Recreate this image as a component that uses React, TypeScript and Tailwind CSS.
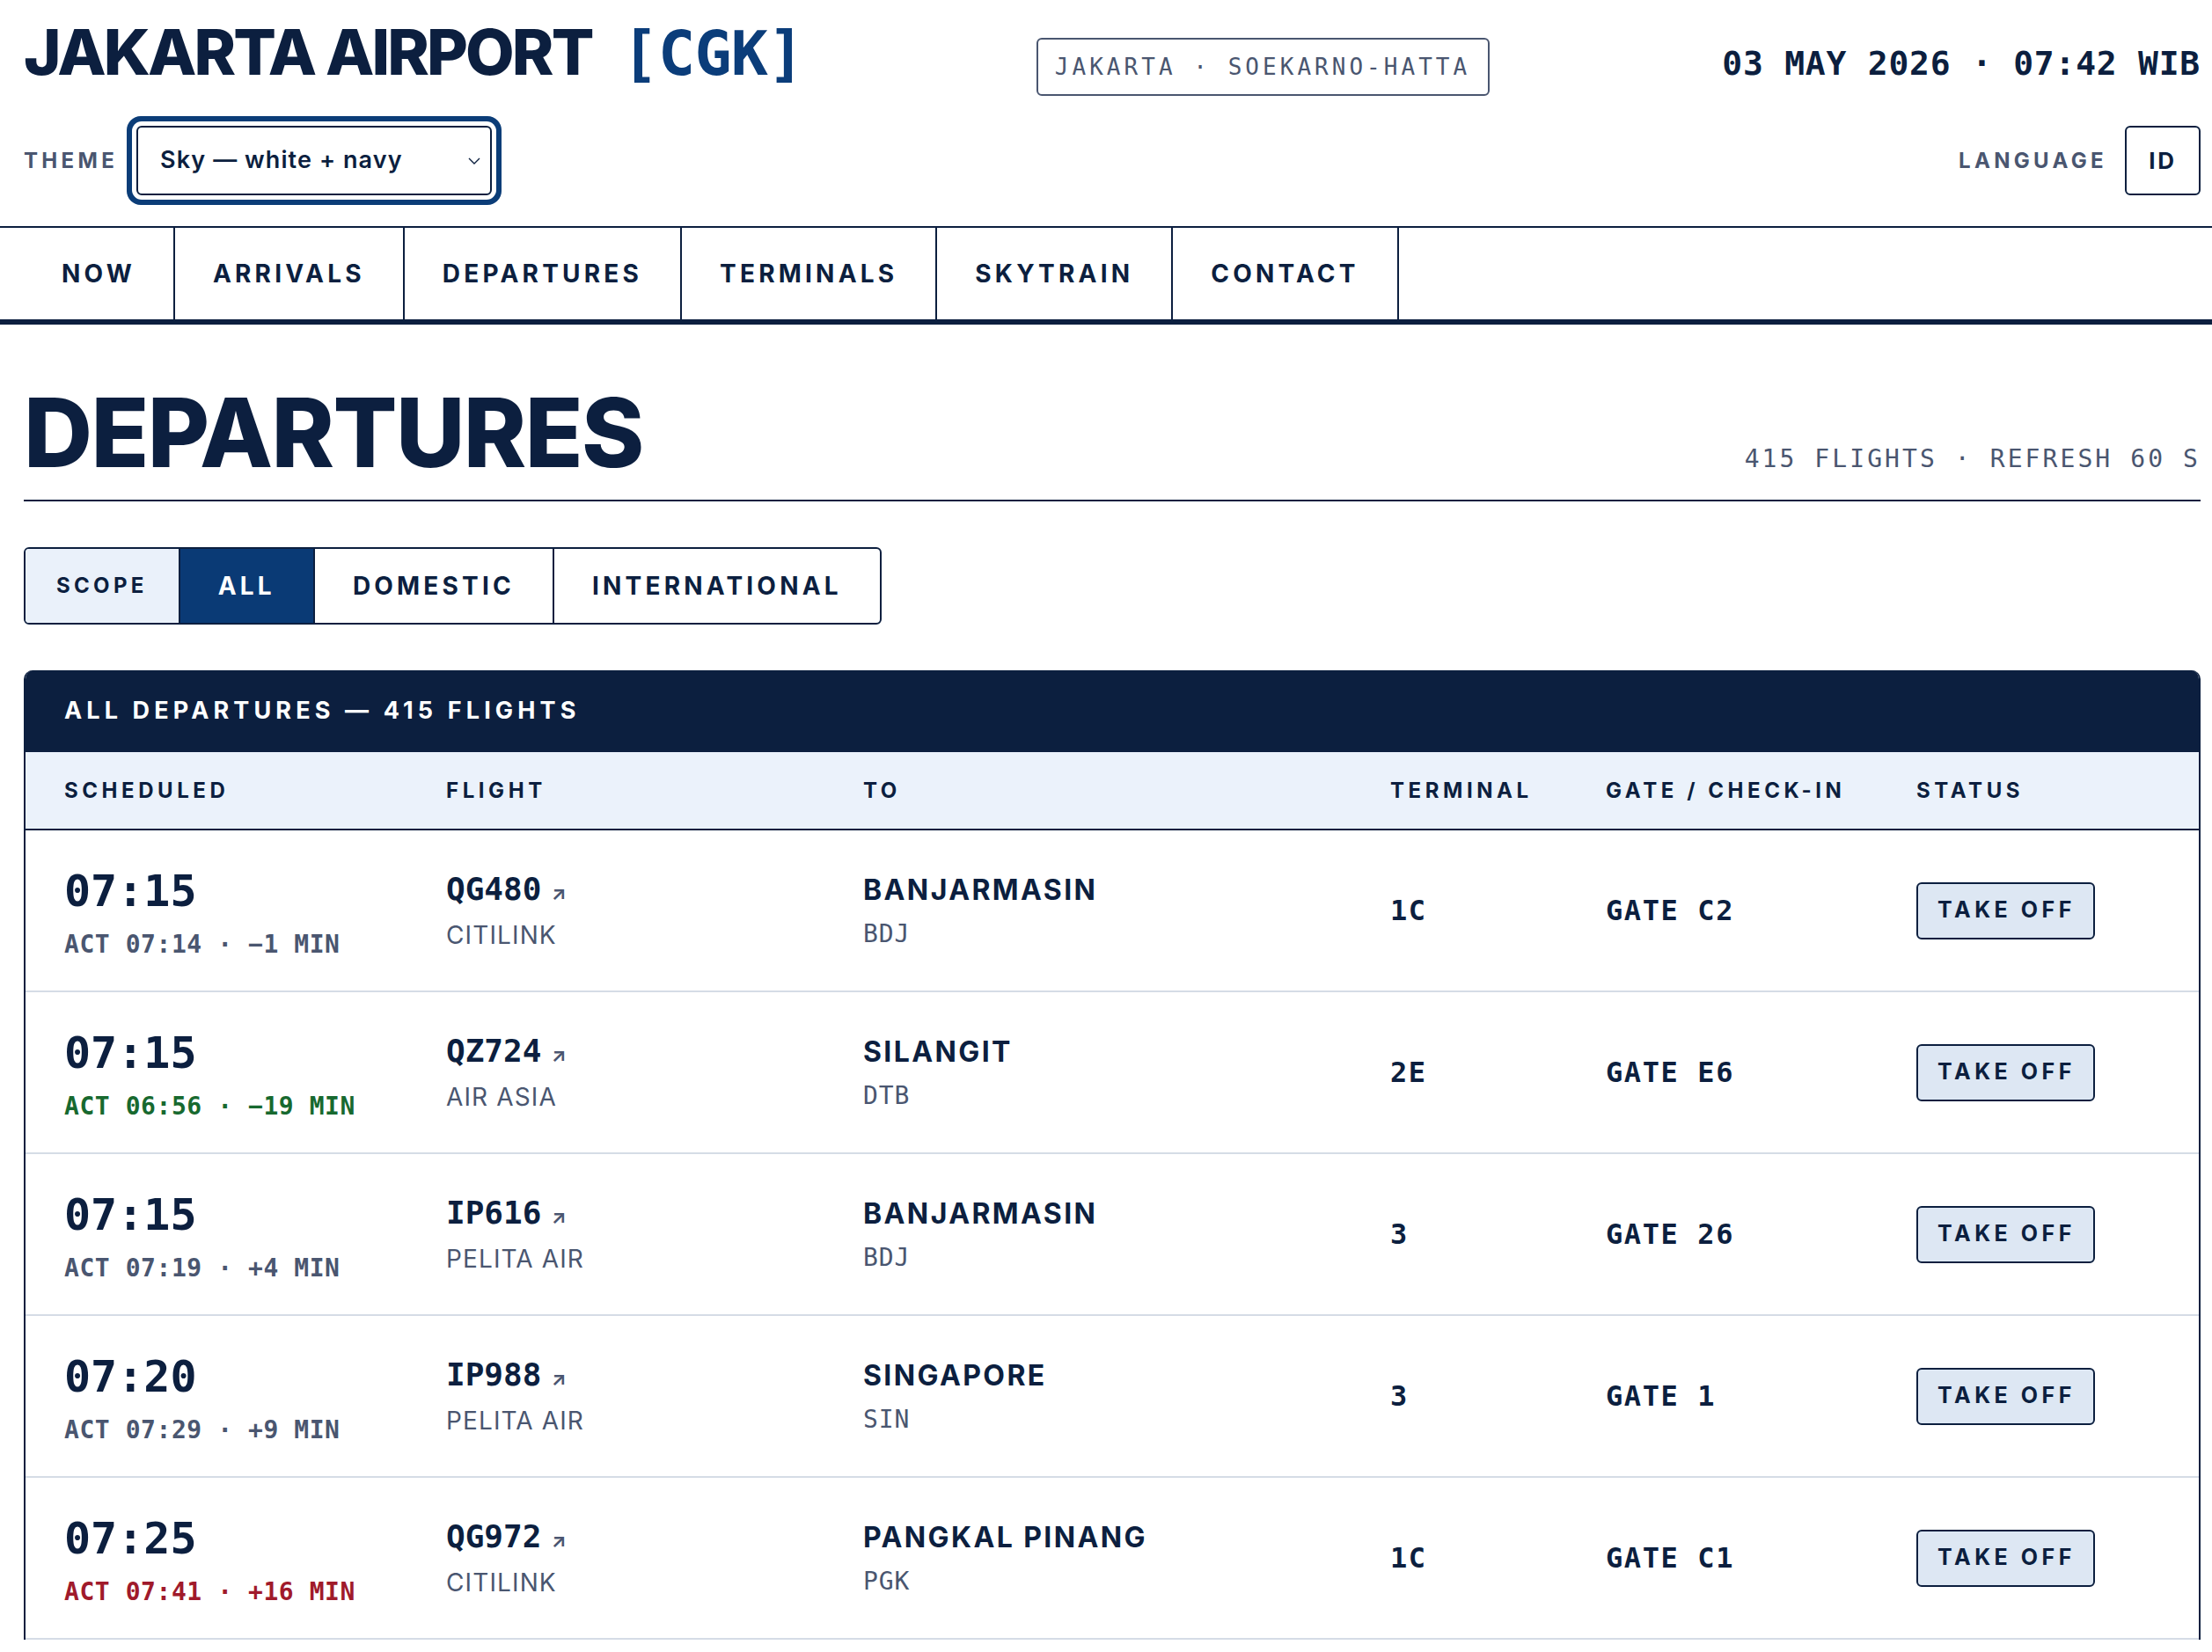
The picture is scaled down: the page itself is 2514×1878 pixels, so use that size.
const SANS = "font-['Inter','Liberation_Sans',sans-serif]"
const MONO = "font-['DejaVu_Sans_Mono','Liberation_Mono',monospace]"

type Flight = {
  time: string
  act: string
  delta: 'ok' | 'early' | 'late'
  code: string
  airline: string
  city: string
  iata: string
  terminal: string
  gate: string
}

const flights: Flight[] = [
  { time: '07:15', act: 'ACT 07:14 · −1 MIN', delta: 'ok', code: 'QG480', airline: 'CITILINK', city: 'BANJARMASIN', iata: 'BDJ', terminal: '1C', gate: 'GATE C2' },
  { time: '07:15', act: 'ACT 06:56 · −19 MIN', delta: 'early', code: 'QZ724', airline: 'AIR ASIA', city: 'SILANGIT', iata: 'DTB', terminal: '2E', gate: 'GATE E6' },
  { time: '07:15', act: 'ACT 07:19 · +4 MIN', delta: 'ok', code: 'IP616', airline: 'PELITA AIR', city: 'BANJARMASIN', iata: 'BDJ', terminal: '3', gate: 'GATE 26' },
  { time: '07:20', act: 'ACT 07:29 · +9 MIN', delta: 'ok', code: 'IP988', airline: 'PELITA AIR', city: 'SINGAPORE', iata: 'SIN', terminal: '3', gate: 'GATE 1' },
  { time: '07:25', act: 'ACT 07:41 · +16 MIN', delta: 'late', code: 'QG972', airline: 'CITILINK', city: 'PANGKAL PINANG', iata: 'PGK', terminal: '1C', gate: 'GATE C1' },
]

const navItems = ['NOW', 'ARRIVALS', 'DEPARTURES', 'TERMINALS', 'SKYTRAIN', 'CONTACT']

const cols = 'grid grid-cols-[434px_474px_599px_245px_353px_1fr] pl-[44px]'

function FlightRow({ f }: { f: Flight }) {
  const actColor =
    f.delta === 'early' ? 'text-[#17692f]' : f.delta === 'late' ? 'text-[#a01a2b]' : 'text-[#4a5670]'

  return (
    <div className={`${cols} h-[184px] items-center border-b-2 border-[#d5dce6]`}>
      {/* Scheduled */}
      <div className="pt-[6px]">
        <div className={`${MONO} text-[50px] leading-none font-bold`}>{f.time}</div>
        <div className={`${MONO} ${actColor} mt-[22px] text-[28px] leading-none font-bold tracking-[0.02em]`}>
          {f.act}
        </div>
      </div>

      {/* Flight */}
      <div>
        <div className="flex items-baseline">
          <span className={`${MONO} text-[36px] leading-none font-bold`}>{f.code}</span>
          <span className="ml-[11px] text-[22px] leading-none font-bold text-[#4a5670]">↗</span>
        </div>
        <div className="mt-[20px] text-[28px] leading-none tracking-[0.04em] text-[#4a5670]">{f.airline}</div>
      </div>

      {/* To */}
      <div className="pt-[2px]">
        <div className="text-[32px] leading-none font-bold tracking-[0.075em]">{f.city}</div>
        <div className={`${MONO} mt-[20px] text-[28px] leading-none tracking-[0.03em] text-[#4a5670]`}>{f.iata}</div>
      </div>

      <div className={`${MONO} text-[32px] leading-none font-bold tracking-[0.05em]`}>{f.terminal}</div>
      <div className={`${MONO} text-[32px] leading-none font-bold tracking-[0.05em]`}>{f.gate}</div>

      {/* Status */}
      <div>
        <span className="inline-flex h-[65px] items-center rounded-[6px] border-2 border-[#0c1f3f] bg-[#dde7f3] pr-[20px] pl-[22px] text-[25px] font-bold tracking-[0.18em]">
          TAKE OFF
        </span>
      </div>
    </div>
  )
}

export default function App() {
  return (
    <div className={`${SANS} h-screen overflow-hidden bg-white text-[#0c1f3f]`}>
      {/* Header */}
      <header className="pt-[23px] pl-[27px] pr-[13px]">
        <div className="flex h-[85px] items-baseline justify-between">
          <h1 className="text-[72px] leading-none font-extrabold tracking-[-0.04em]">
            JAKARTA AIRPORT
            <span className={`${MONO} ml-[34px] text-[70px] font-semibold tracking-[-0.01em] text-[#0b3d7a]`}>[CGK]</span>
          </h1>
          <div
            className={`${MONO} flex h-[66px] items-center rounded-[6px] border-2 border-[#4a5670] pr-[20px] pl-[19px] text-[26px] leading-none tracking-[0.155em] text-[#4a5670]`}
          >
            JAKARTA · SOEKARNO-HATTA
          </div>
          <div className={`${MONO} text-[38px] leading-none font-bold tracking-[0.02em]`}>03 MAY 2026 · 07:42 WIB</div>
        </div>

        <div className="mt-[35px] flex h-[79px] items-center justify-between">
          <div className="flex items-center">
            <span className="text-[24px] font-bold tracking-[0.18em] text-[#4a5670]">THEME</span>
            <div className="relative ml-[21px]">
              <select
                defaultValue="sky"
                className="h-[79px] w-[404px] appearance-none rounded-[6px] border-2 border-[#0c1f3f] bg-white pl-[25px] text-[27px] font-semibold tracking-[0.04em] text-[#0c1f3f] ring-[6px] ring-[#0b3d78] ring-offset-[5px] outline-none"
              >
                <option value="sky">Sky — white + navy</option>
                <option value="night">Night — navy + white</option>
              </select>
              <svg
                className="pointer-events-none absolute top-[36px] right-[13px]"
                width="14"
                height="8"
                viewBox="0 0 14 8"
                fill="none"
                stroke="#0c1f3f"
                strokeWidth="1.4"
              >
                <path d="M1 1l6 6 6-6" />
              </svg>
            </div>
          </div>
          <div className="flex items-center">
            <span className="text-[24px] font-bold tracking-[0.18em] text-[#4a5670]">LANGUAGE</span>
            <button className="ml-[20px] flex h-[79px] w-[86px] items-center justify-center rounded-[6px] border-2 border-[#0c1f3f] text-[26px] font-bold tracking-[0.1em]">
              ID
            </button>
          </div>
        </div>
      </header>

      {/* Nav */}
      <nav className="mt-[35px] border-t-2 border-b-[6px] border-[#0c1f3f]">
        <ul className="flex pl-[27px]">
          {navItems.map(item => (
            <li
              key={item}
              className="flex h-[104px] items-center border-r-2 border-[#0c1f3f] px-[43px] text-[28px] font-bold tracking-[0.15em]"
            >
              {item}
            </li>
          ))}
        </ul>
      </nav>

      <main className="pl-[27px] pr-[13px]">
        {/* Page title */}
        <div className="mt-[69px] flex items-baseline justify-between border-b-2 border-[#0c1f3f] pb-[22px]">
          <h2 className="text-[108px] leading-none font-extrabold tracking-[-0.015em]">DEPARTURES</h2>
          <span className={`${MONO} text-[28px] leading-none tracking-[0.11em] text-[#4a5670]`}>
            415 FLIGHTS · REFRESH 60 S
          </span>
        </div>

        {/* Scope switch */}
        <div className="mt-[52px] inline-flex h-[88px] overflow-hidden rounded-[6px] border-2 border-[#0c1f3f]">
          <span className="flex items-center border-r-2 border-[#0c1f3f] bg-[#eaf1fa] px-[35px] text-[24px] font-bold tracking-[0.18em]">
            SCOPE
          </span>
          <button className="flex items-center border-r-2 border-[#0c1f3f] bg-[#0a3a75] px-[43px] text-[28px] font-bold tracking-[0.15em] text-white">
            ALL
          </button>
          <button className="flex items-center border-r-2 border-[#0c1f3f] px-[43px] text-[28px] font-bold tracking-[0.15em]">
            DOMESTIC
          </button>
          <button className="flex items-center px-[43px] text-[28px] font-bold tracking-[0.15em]">INTERNATIONAL</button>
        </div>

        {/* Board */}
        <section className="mt-[52px] overflow-hidden rounded-t-[10px] border-x-2 border-[#0c1f3f]">
          <div className="flex h-[93px] items-center bg-[#0c1f3f] pl-[44px] text-[27px] font-bold tracking-[0.19em] text-white">
            ALL DEPARTURES — 415 FLIGHTS
          </div>
          <div className={`${cols} h-[89px] items-center border-b-2 border-[#0c1f3f] bg-[#ebf2fb] text-[24px] font-bold tracking-[0.19em]`}>
            <span>SCHEDULED</span>
            <span>FLIGHT</span>
            <span>TO</span>
            <span>TERMINAL</span>
            <span>GATE / CHECK-IN</span>
            <span>STATUS</span>
          </div>
          {flights.map((f, i) => (
            <FlightRow key={i} f={f} />
          ))}
        </section>
      </main>
    </div>
  )
}
